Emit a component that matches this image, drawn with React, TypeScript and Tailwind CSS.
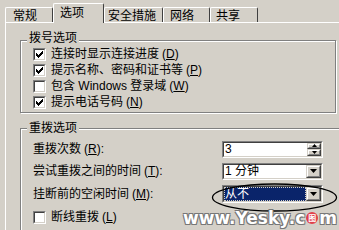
import React from "react";

const FONT = "font-['Liberation_Sans','Noto_Sans_CJK_SC',sans-serif]";

const CHECK_TOPS = [2, 3, 4, 3, 2, 1, 0];

function CheckBox({ on }: { on: boolean }) {
	return (
		<div className="w-[13px] h-[13px] shrink-0 border border-t-[#808080] border-l-[#808080] border-r-white border-b-white">
			<div className="w-full h-full border border-t-[#404040] border-l-[#404040] border-r-[#d4d0c8] border-b-[#d4d0c8] bg-white">
				{on && (
					<svg width="9" height="9" viewBox="0 0 9 9" className="block">
						{CHECK_TOPS.map((t, i) => (
							<rect key={`c-${i}`} x={1 + i} y={1 + t} width="1" height="3" fill="#000" />
						))}
					</svg>
				)}
			</div>
		</div>
	);
}

function Key({ k }: { k: string }) {
	return (
		<span className="ml-[3px]">
			(<span className="underline underline-offset-[1px]">{k}</span>)
		</span>
	);
}

function Raised({ className, children }: { className: string; children?: React.ReactNode }) {
	return (
		<div className={`border border-t-[#d4d0c8] border-l-[#d4d0c8] border-r-[#404040] border-b-[#404040] bg-[#d4d0c8] ${className}`}>
			<div className="w-full h-full border border-t-white border-l-white border-r-[#808080] border-b-[#808080] flex items-center justify-center">
				{children}
			</div>
		</div>
	);
}

function Sunken({ children }: { children: React.ReactNode }) {
	return (
		<div className="w-[101px] h-full border border-t-[#808080] border-l-[#808080] border-r-white border-b-white">
			<div className="w-full h-full border border-t-[#404040] border-l-[#404040] border-r-[#d4d0c8] border-b-[#d4d0c8] bg-white flex items-center">
				{children}
			</div>
		</div>
	);
}

function DownArrow({ w = 7 }: { w?: number }) {
	const h = Math.ceil(w / 2);
	return (
		<svg width={w} height={h} viewBox={`0 0 ${w} ${h}`} className="block">
			<polygon points={`0,0 ${w},0 ${w / 2},${h}`} fill="#000" />
		</svg>
	);
}

function UpArrow() {
	return (
		<svg width="5" height="3" viewBox="0 0 5 3" className="block">
			<polygon points="0,3 5,3 2.5,0" fill="#000" />
		</svg>
	);
}

function Legend({ text, className }: { text: string; className: string }) {
	return (
		<div className={`flex h-[15px] ${className}`}>
			<div className="w-[6px] shrink-0" />
			<div className="px-[2px] bg-[#d4d0c8] whitespace-nowrap">{text}</div>
		</div>
	);
}

const TABS = [
	{ label: "常规", w: "w-[48px]", pl: "pl-[7px]" },
	{ label: "选项", w: "w-[51px]", pl: "pl-[6px]", active: true },
	{ label: "安全措施", w: "w-[59px]", pl: "pl-[3px]" },
	{ label: "网络", w: "w-[47px]", pl: "pl-[6px]" },
	{ label: "共享", w: "w-[48px]", pl: "pl-[5px]" },
];

const DIAL = [
	{ text: "连接时显示连接进度", k: "D", on: true },
	{ text: "提示名称、密码和证书等", k: "P", on: true },
	{ text: "包含 Windows 登录域", k: "W", on: false },
	{ text: "提示电话号码", k: "N", on: true },
];

const GROUP = "border border-[#808080] shadow-[1px_1px_0_#fff,inset_1px_1px_0_#fff]";

export default function App() {
	return (
		<div className={`relative w-[339px] h-[230px] overflow-hidden bg-[#d4d0c8] text-black text-[12px] leading-[14px] ${FONT}`}>
			{/* tab strip */}
			<div className="flex items-end h-[22px] pl-[5px]">
				{TABS.map((t) => (
					<div
						key={t.label}
						className={`${t.w} ${t.pl} shrink-0 flex rounded-t-[2px] border-l border-t border-l-white border-t-white border-r border-r-[#404040] bg-[#d4d0c8] ${
							t.active ? "relative z-10 h-[20px] -mb-px pt-[2px]" : "h-[15px] pt-px"
						}`}
					>
						<span className="whitespace-nowrap">{t.label}</span>
					</div>
				))}
			</div>

			{/* panel */}
			<div className="ml-[5px] w-[360px] h-[220px] border-t border-l border-white pl-[14px] pt-[17px]">
				{/* group 1 */}
				<div className={`w-[316px] h-[73px] ${GROUP}`}>
					<Legend text="拨号选项" className="-mt-[10px]" />
					<div className="pl-[12px]">
						{DIAL.map((d) => (
							<div key={d.k} className="flex items-center h-[16px] gap-[5px] whitespace-nowrap">
								<CheckBox on={d.on} />
								<span>
									{d.text}
									<Key k={d.k} />
								</span>
							</div>
						))}
					</div>
				</div>

				{/* group 2 */}
				<div className={`mt-[15px] w-[340px] h-[120px] ${GROUP}`}>
					<Legend text="重拨选项" className="-mt-[8px]" />
					<div className="mt-[3px] pl-[12px] grid grid-cols-[189px_101px] items-center">
						<div className="h-[20px] flex items-center">
							重拨次数<Key k="R" />:
						</div>
						<div className="h-[17px]">
							<Sunken>
								<span className="pl-[1px] flex-1">3</span>
								<div className="w-[14px] h-full flex flex-col">
									<Raised className="w-full h-1/2">
										<UpArrow />
									</Raised>
									<Raised className="w-full h-1/2">
										<DownArrow w={5} />
									</Raised>
								</div>
							</Sunken>
						</div>

						<div className="h-[24px] flex items-center">
							尝试重拨之间的时间<Key k="T" />:
						</div>
						<div className="h-[17px]">
							<Sunken>
								<span className="pl-[1px] flex-1 whitespace-nowrap">1 分钟</span>
								<Raised className="w-[15px] h-full">
									<DownArrow />
								</Raised>
							</Sunken>
						</div>

						<div className="h-[22px] flex items-center">
							挂断前的空闲时间<Key k="M" />:
						</div>
						<div className="h-[18px]">
							<Sunken>
								<span className="flex-1 h-full flex items-center bg-[#0a246a] text-white outline-1 outline-dotted outline-[#d4d0c8] -outline-offset-1 pl-[1px]">
									从不
								</span>
								<Raised className="w-[15px] h-full">
									<DownArrow />
								</Raised>
							</Sunken>
						</div>

						<div className="h-[24px] flex items-center gap-[5px] col-span-2">
							<CheckBox on={false} />
							<span>
								断线重拨<Key k="L" />
							</span>
						</div>
					</div>
				</div>
			</div>

			{/* hand-drawn annotation */}
			<svg className="absolute left-[211px] top-[182px]" width="127" height="31" viewBox="0 0 127 31">
				<ellipse cx="63.5" cy="15.5" rx="62" ry="13.5" fill="none" stroke="#000" strokeWidth="1.3" />
			</svg>

			{/* watermark */}
			<div className="absolute right-[2px] top-[208px] w-max whitespace-nowrap flex items-center font-['DejaVu_Sans',sans-serif] font-bold text-[17px] leading-[20px] text-white [text-shadow:1px_1px_0_#777,-1px_-1px_0_#777,1px_-1px_0_#777,-1px_1px_0_#777]">
				<span>www.Yesky.c</span>
				<span className="shrink-0 mx-[1px] w-[12px] h-[12px] rounded-full bg-[#e0404a] text-[8px] leading-[12px] text-center [text-shadow:none] font-['Noto_Sans_CJK_SC',sans-serif]">
					图
				</span>
				<span>m</span>
			</div>
		</div>
	);
}
